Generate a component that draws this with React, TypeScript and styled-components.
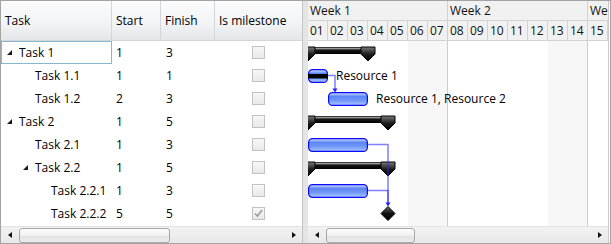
import React from "react";
import styled, { createGlobalStyle } from "styled-components";

const GlobalStyle = createGlobalStyle`
  html, body { margin: 0; padding: 0; background: #fff; }
  body {
    font-family: "Open Sans", "Segoe UI", sans-serif;
    font-size: 12px;
    color: #000;
  }
  * { box-sizing: border-box; }
`;

interface TaskRow {
  name: string;
  level: number;
  expandable: boolean;
  start: number;
  finish: number;
  milestone: boolean;
}

const tasks: TaskRow[] = [
  { name: "Task 1", level: 0, expandable: true, start: 1, finish: 3, milestone: false },
  { name: "Task 1.1", level: 1, expandable: false, start: 1, finish: 1, milestone: false },
  { name: "Task 1.2", level: 1, expandable: false, start: 2, finish: 3, milestone: false },
  { name: "Task 2", level: 0, expandable: true, start: 1, finish: 5, milestone: false },
  { name: "Task 2.1", level: 1, expandable: false, start: 1, finish: 3, milestone: false },
  { name: "Task 2.2", level: 1, expandable: true, start: 1, finish: 5, milestone: false },
  { name: "Task 2.2.1", level: 2, expandable: false, start: 1, finish: 3, milestone: false },
  { name: "Task 2.2.2", level: 2, expandable: false, start: 5, finish: 5, milestone: true },
];

const DAY = 20;
const ROW = 23;
const days = Array.from({ length: 15 }, (_, i) => i + 1);

const App = () => {
  return (
    <>
      <GlobalStyle />
      <Frame>
        <LeftPane>
          <GridHeader>
            <HeaderCell>Task</HeaderCell>
            <HeaderCell>Start</HeaderCell>
            <HeaderCell>Finish</HeaderCell>
            <HeaderCell $last>Is milestone</HeaderCell>
          </GridHeader>
          <GridBody>
            {tasks.map((t, i) => (
              <Row key={t.name}>
                <NameCell $level={t.level} $selected={i === 0}>
                  <Expander>
                    {t.expandable && (
                      <svg width="5" height="5" viewBox="0 0 5 5">
                        <polygon points="5,0 5,5 0,5" fill="#1a1a1a" />
                      </svg>
                    )}
                  </Expander>
                  {t.name}
                </NameCell>
                <Cell>{t.start}</Cell>
                <Cell $pad={5}>{t.finish}</Cell>
                <CheckCell>
                  <Checkbox>
                    {t.milestone && (
                      <svg width="11" height="11" viewBox="0 0 11 11">
                        <path d="M2 5.5 L4.5 8 L9 2" stroke="#9a9a9a" strokeWidth="1.6" fill="none" />
                      </svg>
                    )}
                  </Checkbox>
                </CheckCell>
              </Row>
            ))}
          </GridBody>
          <ScrollBar>
            <ArrowButton $dir="left" />
            <Track>
              <Thumb $offset={1} $width={151} />
            </Track>
            <ArrowButton $dir="right" />
          </ScrollBar>
        </LeftPane>
        <Splitter />
        <RightPane>
          <TimeHeader>
            <WeekRow>
              <WeekCell $width={7 * DAY}>Week 1</WeekCell>
              <WeekCell $width={7 * DAY}>Week 2</WeekCell>
              <WeekCell $width={7 * DAY}>Week 3</WeekCell>
            </WeekRow>
            <DayRow>
              {days.map((d) => (
                <DayCell key={d}>{String(d).padStart(2, "0")}</DayCell>
              ))}
            </DayRow>
          </TimeHeader>
          <TimeBody>
            {days.map((d) => {
              const dow = ((d - 1) % 7) + 1;
              return <DayColumn key={d} $weekend={dow >= 6} $weekEnd={dow === 7} />;
            })}
            <Chart />
          </TimeBody>
          <ScrollBar>
            <ArrowButton $dir="left" />
            <Track>
              <Thumb $offset={1} $width={89} />
            </Track>
            <ArrowButton $dir="right" />
          </ScrollBar>
        </RightPane>
      </Frame>
    </>
  );
};

export default App;

const Summary = ({ x1, x2, row }: { x1: number; x2: number; row: number }) => {
  const top = row * ROW;
  const cap = (c: number) =>
    `${c - 7},${top + 6} ${c + 7},${top + 6} ${c + 7},${top + 13} ${c},${top + 20} ${c - 7},${top + 13}`;
  return (
    <g>
      <rect x={x1} y={top + 6} width={x2 - x1} height={7} fill="url(#sumBody)" />
      <polygon points={cap(x1)} fill="url(#capFill)" stroke="#000" strokeWidth="1" />
      <polygon points={cap(x2)} fill="url(#capFill)" stroke="#000" strokeWidth="1" />
    </g>
  );
};

const TaskBar = ({ start, finish, row }: { start: number; finish: number; row: number }) => {
  const x1 = (start - 1) * DAY;
  const x2 = finish * DAY;
  const top = row * ROW;
  return (
    <rect
      x={x1 + 0.6}
      y={top + 5.6}
      width={x2 - x1 - 1.2}
      height={12.8}
      rx={4}
      fill="url(#blueFill)"
      stroke="#0a0aff"
      strokeWidth="1.2"
    />
  );
};

const Chart = () => {
  const mid = (r: number) => r * ROW + 11.5;
  return (
    <Overlay width="300" height="185" viewBox="0 0 300 185">
      <defs>
        <linearGradient id="blueFill" x1="0" y1="0" x2="0" y2="1">
          <stop offset="0" stopColor="#dce6ff" />
          <stop offset="0.3" stopColor="#5e86f6" />
          <stop offset="0.6" stopColor="#6f96f8" />
          <stop offset="1" stopColor="#acc8ff" />
        </linearGradient>
        <linearGradient id="sumBody" x1="0" y1="0" x2="0" y2="1">
          <stop offset="0" stopColor="#000" />
          <stop offset="0.2" stopColor="#a0a0a0" />
          <stop offset="0.45" stopColor="#151515" />
          <stop offset="1" stopColor="#000" />
        </linearGradient>
        <linearGradient id="capFill" x1="0" y1="0" x2="0" y2="1">
          <stop offset="0" stopColor="#7a7a7a" />
          <stop offset="0.5" stopColor="#1e1e1e" />
          <stop offset="1" stopColor="#000" />
        </linearGradient>
        <linearGradient id="diamondFill" x1="0" y1="0" x2="0" y2="1">
          <stop offset="0" stopColor="#6a6a6a" />
          <stop offset="0.5" stopColor="#101010" />
          <stop offset="1" stopColor="#000" />
        </linearGradient>
      </defs>

      <Summary x1={0} x2={60} row={0} />
      <TaskBar start={1} finish={1} row={1} />
      <rect x={0} y={ROW + 10} width={20} height={4.5} fill="#000" />
      <TaskBar start={2} finish={3} row={2} />
      <Summary x1={0} x2={80} row={3} />
      <TaskBar start={1} finish={3} row={4} />
      <Summary x1={0} x2={80} row={5} />
      <TaskBar start={1} finish={3} row={6} />
      <polygon
        points={`80,${mid(7) - 7} 87,${mid(7)} 80,${mid(7) + 7} 73,${mid(7)}`}
        fill="url(#diamondFill)"
        stroke="#000"
      />

      <g stroke="#2a2aff" strokeOpacity="0.6" strokeWidth="1.5" fill="none">
        <polyline points={`20,${mid(1)} 27,${mid(1)} 27,${ROW * 2 + 2}`} />
        <polyline points={`60,${mid(4)} 80,${mid(4)} 80,${mid(7) - 10}`} />
        <polyline points={`60,${mid(6)} 80,${mid(6)} 80,${mid(7) - 10}`} />
      </g>
      <g fill="#2020ff">
        <polygon points={`24.5,${ROW * 2 + 1.5} 29.5,${ROW * 2 + 1.5} 27,${ROW * 2 + 5.5}`} />
        <polygon points={`77.5,${mid(7) - 11} 82.5,${mid(7) - 11} 80,${mid(7) - 7}`} />
      </g>

      <ChartLabel x={28} y={mid(1)}>Resource 1</ChartLabel>
      <ChartLabel x={68} y={mid(2)}>Resource 1, Resource 2</ChartLabel>
    </Overlay>
  );
};

const Frame = styled.div`
  width: 611px;
  height: 244px;
  border: 1px solid #a3a3a3;
  display: flex;
  background: #fff;
  overflow: hidden;
`;
const LeftPane = styled.div`
  width: 302px;
  flex: none;
  display: flex;
  flex-direction: column;
  border-right: 1px solid #c4c4c4;
`;
const Splitter = styled.div`
  width: 5px;
  flex: none;
  background: #e4e4e4;
`;
const RightPane = styled.div`
  width: 301px;
  flex: none;
  margin-right: 1px;
  display: flex;
  flex-direction: column;
  border-right: 1px solid #c8c8c8;
  overflow: hidden;
`;
const columns = "111px 49px 54px 87px";
const GridHeader = styled.div`
  display: grid;
  grid-template-columns: ${columns};
  height: 40px;
  flex: none;
  border-bottom: 1px solid #d3d5d9;
  background: linear-gradient(#fbfbfc, #f3f4f5 55%, #e3e5e9);
`;
const HeaderCell = styled.div<{ $last?: boolean }>`
  display: flex;
  align-items: center;
  padding-left: 4px;
  border-right: ${({ $last }) => ($last ? "none" : "1px solid #d3d5d9")};
  white-space: nowrap;
`;
const GridBody = styled.div`
  flex: 1;
  overflow: hidden;
`;
const Row = styled.div`
  display: grid;
  grid-template-columns: ${columns};
  height: ${ROW}px;
`;
const Cell = styled.div<{ $pad?: number }>`
  display: flex;
  align-items: center;
  padding-left: ${({ $pad }) => $pad ?? 4}px;
  white-space: nowrap;
`;
const NameCell = styled(Cell)<{ $level: number; $selected: boolean }>`
  padding-left: ${({ $level }) => 5 + $level * 16}px;
  border: 1px solid ${({ $selected }) => ($selected ? "#86b8cb" : "transparent")};
`;
const Expander = styled.span`
  width: 12px;
  flex: none;
  display: flex;
  align-items: center;
`;
const CheckCell = styled.div`
  display: flex;
  align-items: center;
  justify-content: center;
`;
const Checkbox = styled.span`
  width: 13px;
  height: 13px;
  border: 1px solid #c2c2c2;
  background: linear-gradient(#f7f7f7, #e9e9e9);
  display: flex;
  align-items: center;
  justify-content: center;
`;
const ScrollBar = styled.div`
  height: 17px;
  flex: none;
  display: flex;
  align-items: center;
  background: linear-gradient(#f2f2f2, #e8e8e8);
  border-top: 1px solid #e2e2e2;
`;
const ArrowButton = styled.div<{ $dir: "left" | "right" }>`
  width: 17px;
  height: 100%;
  flex: none;
  display: flex;
  align-items: center;
  justify-content: center;

  &::before {
    content: "";
    border-style: solid;
    border-color: transparent;
    border-width: ${({ $dir }) => ($dir === "left" ? "3px 4px 3px 0" : "3px 0 3px 4px")};
    ${({ $dir }) => ($dir === "left" ? "border-right-color: #111;" : "border-left-color: #111;")}
  }
`;
const Track = styled.div`
  flex: 1;
  height: 100%;
  display: flex;
  align-items: center;
`;
const Thumb = styled.div<{ $offset: number; $width: number }>`
  margin-left: ${({ $offset }) => $offset}px;
  width: ${({ $width }) => $width}px;
  height: 15px;
  border: 1px solid #a8a8a8;
  border-radius: 3px;
  background: linear-gradient(#fdfdfd, #f0f0f0 50%, #e2e2e2 55%, #ececec);
`;
const TimeHeader = styled.div`
  height: 40px;
  flex: none;
  display: flex;
  flex-direction: column;
  background: #f1f1f1;
`;
const WeekRow = styled.div`
  height: 20px;
  display: flex;
  border-bottom: 1px solid #d2d2d2;
`;
const WeekCell = styled.div<{ $width: number }>`
  width: ${({ $width }) => $width}px;
  flex: none;
  padding-left: 2px;
  display: flex;
  align-items: center;
  border-right: 1px solid #d2d2d2;
  white-space: nowrap;
  color: #111;
`;
const DayRow = styled.div`
  height: 20px;
  display: flex;
  border-bottom: 1px solid #d2d2d2;
`;
const DayCell = styled.div`
  width: ${DAY}px;
  flex: none;
  padding-left: 2px;
  display: flex;
  align-items: center;
  border-right: 1px solid #d2d2d2;
  color: #111;
`;
const TimeBody = styled.div`
  flex: 1;
  position: relative;
  display: flex;
  overflow: hidden;
`;
const DayColumn = styled.div<{ $weekend: boolean; $weekEnd: boolean }>`
  width: ${DAY}px;
  flex: none;
  background: ${({ $weekend }) => ($weekend ? "#f7f7f7" : "#fff")};
  border-right: ${({ $weekEnd }) => ($weekEnd ? "1px solid #cdcdcd" : "none")};
`;
const Overlay = styled.svg`
  position: absolute;
  left: 0;
  top: 0;
`;
const ChartLabel = styled.text`
  font-family: "Open Sans", "Segoe UI", sans-serif;
  font-size: 12px;
  fill: #000;
  dominant-baseline: central;
`;
